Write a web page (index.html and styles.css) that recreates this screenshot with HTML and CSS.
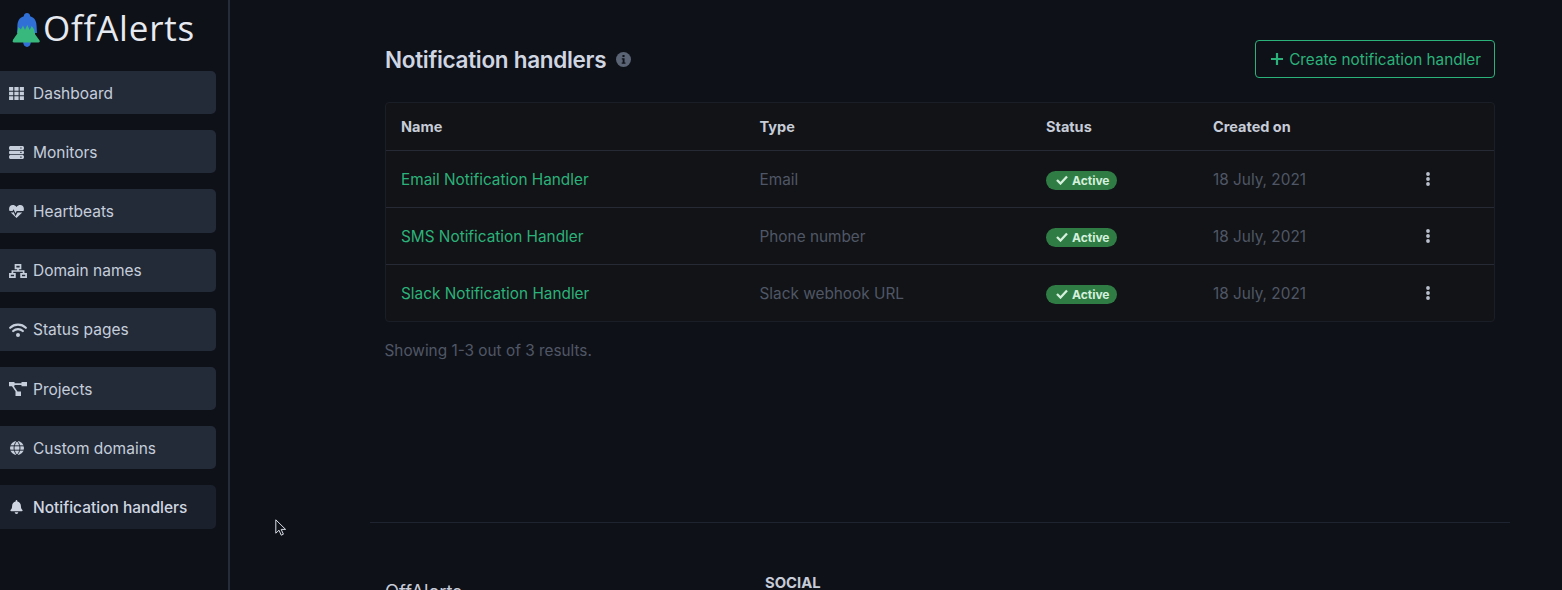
FILE: index.html
```html
<!DOCTYPE html>
<html lang="en">
<head>
<meta charset="utf-8">
<title>Notification handlers - OffAlerts</title>
<link rel="stylesheet" href="styles.css">
</head>
<body>
<aside class="sidebar">
  <div class="brand">
    <svg class="brand-icon" viewBox="0 0 32 36" width="32" height="36">
      <path fill="#2f6fd6" d="M16 1c2 0 3.200 1.400 3.200 3.200C24 5.800 25.500 9.500 25.600 14l.4 7H6l.4-7C6.500 9.500 8 5.800 12.800 4.200 12.800 2.400 14 1 16 1z"/>
      <path fill="#2f6fd6" d="M12.200 30h7.600a3.800 5 0 0 1-7.600 0z"/>
      <path fill="#38b87c" d="M2 27.800l4.200-6 1.200-6.800 2.600 2.500 2-4 2 4.500 2.200-5 2.500 5 2-4 2.500 3.500 1 5 4.200 5.800c.8 1 .4 2.200-1 2.200H3c-1.400 0-1.800-1.200-1-2.200z"/>
    </svg>
    <span class="brand-name">OffAlerts</span>
  </div>
  <nav class="nav">
    <a class="nav-item"><span class="nav-icon"><svg viewBox="0 0 16 14" width="15" height="13"><path fill="currentColor" d="M0 0h4.500v4H0zM5.700 0h4.600v4H5.700zM11.500 0H16v4h-4.500zM0 5h4.500v4H0zM5.700 5h4.600v4H5.700zM11.500 5H16v4h-4.500zM0 10h4.500v4H0zM5.700 10h4.600v4H5.700zM11.500 10H16v4h-4.500z"/></svg></span>Dashboard</a>
    <a class="nav-item"><span class="nav-icon"><svg viewBox="0 0 16 14" width="15" height="13"><path fill="currentColor" fill-rule="evenodd" d="M1 0h14l1 1v2.500l-1 .8H1L0 3.500V1zM1 5h14l1 1v2l-1 1H1L0 8V6zM1 9.800h14l1 1V13l-1 1H1l-1-1v-2.200zM12 1.500v1.300h1.500V1.500zM12 6.300v1.300h1.500V6.300zM12 11.300v1.300h1.500v-1.300z"/></svg></span>Monitors</a>
    <a class="nav-item"><span class="nav-icon"><svg viewBox="0 0 16 14" width="15" height="13"><path fill="currentColor" d="M8 2.200C6.800.600 5.400 0 4 0 1.700 0 0 1.800 0 4.200c0 .9.200 1.600.6 2.300h3.200l1-1.900L6.900 9l1.300-2.500h7.200c.4-.7.600-1.400.6-2.300C16 1.800 14.300 0 12 0c-1.400 0-2.800.6-4 2.200zM1.800 8L8 14l6.200-6H9.100l-2.200 4-2.200-5.100-.1 1.100z"/></svg></span>Heartbeats</a>
    <a class="nav-item"><span class="nav-icon"><svg viewBox="0 0 18 14" width="18" height="14"><path fill="none" stroke="currentColor" stroke-width="1.700" d="M6.500.9h5v3.400h-5zM.9 9.800h5v3.300h-5zM12.100 9.800h5v3.300h-5zM9 4.200V7M3.400 9.800V7h11.200v2.800"/></svg></span>Domain names</a>
    <a class="nav-item"><span class="nav-icon"><svg viewBox="0 0 18 14" width="18" height="14"><path fill="none" stroke="currentColor" stroke-width="2.200" stroke-linecap="round" d="M1.200 4.800C5.500.6 12.500.6 16.800 4.800M4.200 8C6.900 5.500 11.100 5.500 13.800 8"/><circle cx="9" cy="11.900" r="2" fill="currentColor"/></svg></span>Status pages</a>
    <a class="nav-item"><span class="nav-icon"><svg viewBox="0 0 18 14" width="18" height="14"><path fill="currentColor" d="M0 0h5.500v4.200H0zM12.500 0H18v4.200h-5.500zM6.500 9.500h5.500V14H6.500zM5 1.200h7.500v1.800H5zM2.800 4h1.900l3.800 5.500H6.600z"/></svg></span>Projects</a>
    <a class="nav-item"><span class="nav-icon nav-icon-inset"><svg viewBox="0 0 16 16" width="14" height="14"><circle cx="8" cy="8" r="8" fill="currentColor"/><path fill="none" stroke="#232b39" stroke-width="1.100" d="M0 5.500h16M0 10.500h16M8 0C3.500 4 3.500 12 8 16M8 0c4.500 4 4.500 12 0 16"/></svg></span>Custom domains</a>
    <a class="nav-item nav-item-active"><span class="nav-icon nav-icon-inset"><svg viewBox="0 0 448 512" width="13" height="14"><path fill="currentColor" d="M224 512c35.320 0 63.970-28.650 63.970-64H160.030c0 35.350 28.650 64 63.970 64zm215.390-149.710c-19.320-20.760-55.470-51.990-55.470-154.290 0-77.700-54.480-139.900-127.940-155.160V32c0-17.670-14.320-32-31.980-32s-31.980 14.330-31.980 32v20.840C118.560 68.100 64.080 130.300 64.080 208c0 102.300-36.150 133.530-55.470 154.290-6 6.450-8.660 14.160-8.610 21.710.11 16.400 12.980 32 32.100 32h383.800c19.120 0 32-15.600 32.100-32 .05-7.550-2.610-15.270-8.610-21.710z"/></svg></span>Notification handlers</a>
  </nav>
</aside>
<main class="main">
  <div class="content">
    <header class="page-head">
      <h1 class="title">Notification handlers
        <svg class="info" viewBox="0 0 16 16" width="15" height="15"><circle cx="8" cy="8" r="8" fill="#5a6474"/><path fill="#10131a" d="M6.900 3.200h2.200v2.100H6.900zM6.200 6.600h2.900v4.500h1v1.500H6.100v-1.500h1V8.100h-.9z"/></svg>
      </h1>
      <a class="btn"><svg viewBox="0 0 14 14" width="14" height="14"><path fill="none" stroke="currentColor" stroke-width="2.200" d="M7 1v12M1 7h12"/></svg>Create notification handler</a>
    </header>
    <table class="table">
      <thead>
        <tr><th class="col-name">Name</th><th class="col-type">Type</th><th class="col-status">Status</th><th class="col-date">Created on</th><th></th></tr>
      </thead>
      <tbody>
        <tr><td><a class="link">Email Notification Handler</a></td><td>Email</td><td><span class="badge"><svg viewBox="0 0 12 10" width="12" height="10"><path fill="none" stroke="currentColor" stroke-width="2.300" d="M1 5l3.500 3.500L11 1.500"/></svg>Active</span></td><td>18 July, 2021</td><td class="dots-cell"><svg viewBox="0 0 4 14" width="4" height="14"><circle cx="2" cy="2" r="1.900" fill="#b9c0cd"/><circle cx="2" cy="7" r="1.900" fill="#b9c0cd"/><circle cx="2" cy="12" r="1.900" fill="#b9c0cd"/></svg></td></tr>
        <tr><td><a class="link">SMS Notification Handler</a></td><td>Phone number</td><td><span class="badge"><svg viewBox="0 0 12 10" width="12" height="10"><path fill="none" stroke="currentColor" stroke-width="2.300" d="M1 5l3.500 3.500L11 1.500"/></svg>Active</span></td><td>18 July, 2021</td><td class="dots-cell"><svg viewBox="0 0 4 14" width="4" height="14"><circle cx="2" cy="2" r="1.900" fill="#b9c0cd"/><circle cx="2" cy="7" r="1.900" fill="#b9c0cd"/><circle cx="2" cy="12" r="1.900" fill="#b9c0cd"/></svg></td></tr>
        <tr><td><a class="link">Slack Notification Handler</a></td><td>Slack webhook URL</td><td><span class="badge"><svg viewBox="0 0 12 10" width="12" height="10"><path fill="none" stroke="currentColor" stroke-width="2.300" d="M1 5l3.500 3.500L11 1.500"/></svg>Active</span></td><td>18 July, 2021</td><td class="dots-cell"><svg viewBox="0 0 4 14" width="4" height="14"><circle cx="2" cy="2" r="1.900" fill="#b9c0cd"/><circle cx="2" cy="7" r="1.900" fill="#b9c0cd"/><circle cx="2" cy="12" r="1.900" fill="#b9c0cd"/></svg></td></tr>
      </tbody>
    </table>
    <p class="results">Showing 1-3 out of 3 results.</p>
  </div>
  <footer class="footer">
    <div class="footer-brand">OffAlerts</div>
    <div class="footer-social">SOCIAL</div>
  </footer>
</main>
<svg class="cursor" viewBox="0 0 12 18" width="12" height="18"><path fill="#10131a" stroke="#d8dce4" stroke-width="1" d="M.8.8v13.400l3.200-3 2.200 5 2.200-1-2.200-4.800h4.400z"/></svg>
</body>
</html>
```
FILE: styles.css
```css
* { box-sizing: border-box; }
html, body { height: 590px; overflow: hidden; }
body {
  margin: 0;
  display: flex;
  background: #0f1118;
  font-family: Inter, "Liberation Sans", sans-serif;
  color: #c6ccd8;
}
.sidebar {
  flex: 0 0 230px;
  height: 590px;
  border-right: 2px solid #252d3b;
}
.brand {
  display: flex;
  align-items: center;
  height: 71px;
  padding: 0 0 11px 11px;
}
.brand-icon { flex: none; }
.brand-name {
  font-family: "Open Sans", sans-serif;
  font-size: 35px;
  line-height: 40px;
  letter-spacing: 0.8px;
  color: #e6e9ef;
  position: relative;
  top: -2px;
}
.nav {
  display: flex;
  flex-direction: column;
  gap: 16px;
  width: 216px;
}
.nav-item {
  display: flex;
  align-items: center;
  height: 43.200px;
  padding: 1px 0 0 8px;
  border-radius: 0 5px 5px 0;
  background: #232b39;
  font-size: 15.500px;
  color: #c6cedb;
}
.nav-item-active {
  background: #1b212c;
  font-weight: 500;
  color: #d0d6e1;
}
.nav-icon {
  flex: 0 0 25px;
  display: flex;
  align-items: center;
  padding-left: 1px;
}
.nav-icon-inset { padding-left: 2px; }
.main { flex: 1; min-width: 0; padding: 0 52px 0 140px; }
.content { padding: 40px 15px 0; height: 522px; }
.page-head {
  display: flex;
  justify-content: space-between;
  align-items: center;
  height: 38px;
  margin-bottom: 24px;
}
.title {
  display: flex;
  align-items: center;
  gap: 10px;
  margin: 0;
  font-size: 22.500px;
  font-weight: 600;
  letter-spacing: -0.3px;
  color: #cfd6e2;
}
.btn {
  display: flex;
  align-items: center;
  gap: 5px;
  height: 38px;
  padding: 0 13px 0 14px;
  border: 1px solid #2bb27a;
  border-radius: 4px;
  font-size: 15.300px;
  color: #2bb27a;
}
.table {
  width: 100%;
  border-collapse: separate;
  border-spacing: 0;
  table-layout: fixed;
  background: #121316;
  border: 1px solid #1a1e27;
  border-radius: 4px;
  font-size: 15.350px;
  color: #4f5766;
}
.table th {
  height: 48px;
  padding: 0 0 0 15px;
  text-align: left;
  font-size: 14.500px;
  font-weight: 700;
  color: #c6ccd8;
  border-bottom: 1px solid #252a35;
}
.table td {
  height: 57px;
  padding: 0 0 0 15px;
  border-bottom: 1px solid #252a35;
}
.table tbody tr:last-child td { height: 56px; border-bottom: 0; }
.col-name { width: 358.500px; }
.col-type { width: 286.500px; }
.col-status { width: 167px; }
.col-date { width: 200px; }
.link { color: #2bb27a; }
.badge {
  display: inline-flex;
  align-items: center;
  gap: 4px;
  height: 19px;
  padding: 0 7px 0 10px;
  border-radius: 10px;
  background: #2f7d45;
  font-size: 12px;
  font-weight: 700;
  color: #d5f0dc;
  vertical-align: -2px;
}
.table td.dots-cell { padding-left: 28px; }
.dots-cell svg { display: block; }
.results {
  margin: 19px 0 0 -0.5px;
  font-size: 15.350px;
  color: #4f5766;
  line-height: 20px;
}
.footer {
  display: flex;
  border-top: 1px solid #1e2430;
  padding: 50px 15px 0;
}
.footer-brand {
  flex: 0 0 380px;
  padding-top: 7px;
  font-size: 18.400px;
  color: #c6ccd8;
}
.footer-social {
  padding-top: 1px;
  font-size: 14.800px;
  font-weight: 700;
  color: #c6ccd8;
  line-height: 19px;
}
.cursor { position: absolute; left: 275px; top: 519px; }
```
